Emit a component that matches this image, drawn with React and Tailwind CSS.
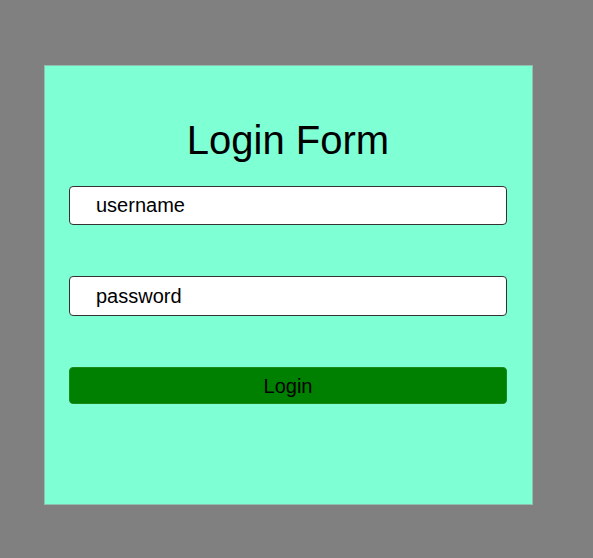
export default function App() {
  return (
    <div className="min-h-[558px] w-full bg-[#808080] pl-[44px] pt-[65px] font-['Liberation_Sans',Arial,sans-serif]">
      <form
        onSubmit={(e) => e.preventDefault()}
        className="flex h-[440px] w-[489px] flex-col border border-[#8fbfae] bg-[#7fffd4] pl-[24px] pr-[25px] pt-[51px]"
      >
        <h1 className="text-center text-[40px] leading-[46px] text-black">Login Form</h1>

        <input
          type="text"
          placeholder="username"
          className="mt-[23px] h-[39px] w-full rounded-[4px] border border-[#333] bg-white pl-[26px] text-[20px] text-black placeholder:text-black"
        />

        <input
          type="password"
          placeholder="password"
          className="mt-[51px] h-[40px] w-full rounded-[4px] border border-[#333] bg-white pl-[26px] text-[20px] text-black placeholder:text-black"
        />

        <button
          type="submit"
          className="mt-[51px] h-[37px] w-full rounded-[4px] border border-[#1a8a1a] bg-[#008000] text-[20px] text-black"
        >
          Login
        </button>
      </form>
    </div>
  );
}
